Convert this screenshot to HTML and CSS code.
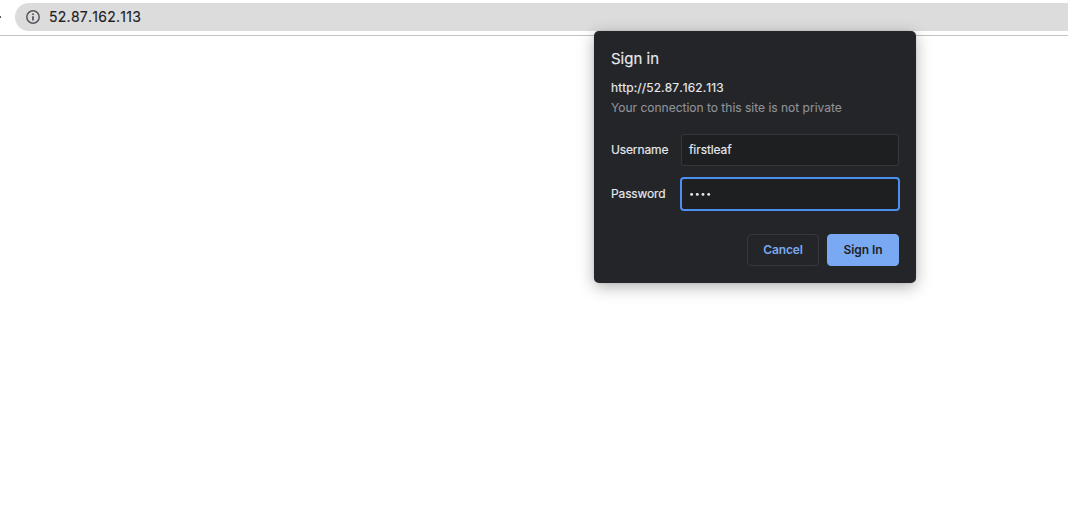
FILE: index.html
```html
<!DOCTYPE html>
<html lang="en">
<head>
<meta charset="utf-8">
<title>52.87.162.113</title>
<link rel="stylesheet" href="styles.css">
</head>
<body>
<header class="toolbar">
  <span class="nav-edge"></span>
  <div class="omnibox">
    <svg class="info" width="14" height="14" viewBox="0 0 14 14" fill="none" stroke="#55585d" stroke-width="1.5"><circle cx="7" cy="7" r="6.2"/><path d="M7 6.2v4.2M7 3.5v1.6" stroke-width="1.8"/></svg>
    <span class="address">52.87.162.113</span>
  </div>
</header>
<form class="dialog">
  <h1 class="title">Sign in</h1>
  <p class="origin">http://52.87.162.113</p>
  <p class="warning">Your connection to this site is not private</p>
  <div class="fields">
    <span class="label username">Username</span>
    <div class="input">firstleaf</div>
    <span class="label password">Password</span>
    <div class="input focused"><svg width="24" height="6" viewBox="0 0 24 6" fill="#e8eaed"><circle cx="1.6" cy="3.4" r="1.45"/><circle cx="7.3" cy="3.4" r="1.45"/><circle cx="13" cy="3.4" r="1.45"/><circle cx="18.7" cy="3.4" r="1.45"/></svg></div>
  </div>
  <div class="actions">
    <div class="button cancel">Cancel</div>
    <div class="button primary">Sign In</div>
  </div>
</form>
</body>
</html>
```
FILE: styles.css
```css
* { box-sizing: border-box; }
body {
  margin: 0;
  height: 508px;
  overflow: hidden;
  background: #fff;
  font-family: Inter, "Liberation Sans", sans-serif;
}
.toolbar {
  display: flex;
  height: 36px;
  padding-top: 3px;
  border-bottom: 1px solid #c3c3c3;
}
.nav-edge {
  width: 1px;
  height: 2px;
  margin: 13px 14px 0 0;
  background: #55585d;
}
.omnibox {
  display: flex;
  align-items: center;
  flex: 1;
  height: 28px;
  padding-left: 11px;
  border-radius: 14px 0 0 14px;
  background: #dcdcdc;
}
.info { margin-right: 9px; }
.address {
  color: #202124;
  font-size: 14px;
  line-height: 28px;
  font-kerning: none;
  letter-spacing: .27px;
  -webkit-text-stroke: .15px;
}
.dialog {
  position: absolute;
  left: 594px;
  top: 31px;
  width: 322px;
  height: 252px;
  padding: 18px 17px 17px;
  border-radius: 5px;
  background: #242529;
  box-shadow: 0 4px 16px rgba(0, 0, 0, .3), 0 0 2px rgba(0, 0, 0, .15);
  color: #e8eaed;
  font-size: 12px;
}
.title, .origin, .warning { margin: 0; white-space: nowrap; }
.title { font-size: 15px; font-weight: 400; line-height: 20px; letter-spacing: 0; -webkit-text-stroke: .15px; }
.origin { margin-top: 9px; line-height: 20px; font-kerning: none; letter-spacing: .12px; -webkit-text-stroke: .15px; }
.warning { line-height: 20px; color: #909398; -webkit-text-stroke: .1px; }
.fields {
  display: grid;
  grid-template-columns: 70px 218px;
  grid-template-rows: 32px 32px;
  row-gap: 12px;
  margin-top: 16px;
  align-items: center;
}
.label, .input { letter-spacing: -.08px; -webkit-text-stroke: .15px; }
.label { padding-bottom: 2px; letter-spacing: -.13px; }
.input {
  display: flex;
  align-items: center;
  height: 32px;
  padding: 0 0 2px 7px;
  border: 1px solid #36373b;
  border-radius: 3px;
  background: #1e1f21;
}
.focused {
  height: 34px;
  margin: -1px;
  padding: 0 0 0 8px;
  border: 2px solid #4d8ff0;
  border-radius: 4px;
}
.actions { display: flex; justify-content: flex-end; gap: 8px; margin-top: 24px; }
.button {
  width: 72px;
  height: 32px;
  border: 1px solid #37383c;
  border-radius: 4px;
  font-weight: 600;
  line-height: 30px;
  letter-spacing: -.1px;
  text-align: center;
}
.cancel { color: #79a9f3; }
.primary { border-color: #79a9f3; background: #79a9f3; color: #202124; }
```
